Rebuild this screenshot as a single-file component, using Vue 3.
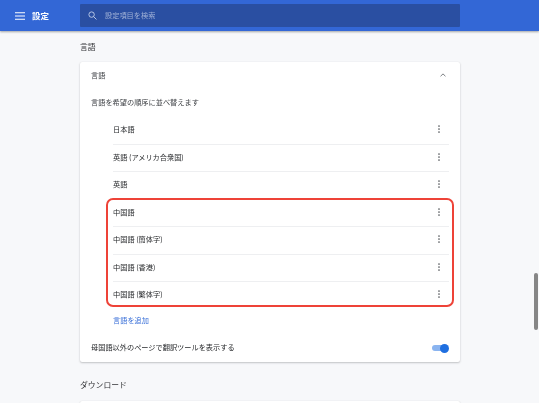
<script setup>
const languages = ['日本語', '英語 (アメリカ合衆国)', '英語', '中国語', '中国語 (簡体字)', '中国語 (香港)', '中国語 (繁体字)']
</script>

<template>
  <div class="page">
    <header class="topbar">
      <div class="brand">
        <svg class="menu" viewBox="0 0 10 8" width="10" height="8"><path d="M0 .75h10M0 4h10M0 7.25h10" stroke="#fff" stroke-width="1.1" /></svg>
        <span class="title">設定</span>
      </div>
      <div class="search">
        <svg viewBox="0 0 10 10" width="9" height="9"><circle cx="4" cy="4" r="3" fill="none" stroke="#c3d0ea" stroke-width="1" /><path d="M6.2 6.2 9.4 9.4" stroke="#c3d0ea" stroke-width="1" /></svg>
        <span class="placeholder">設定項目を検索</span>
      </div>
    </header>
    <main class="content">
      <h2 class="section-title">言語</h2>
      <section class="card">
        <div class="card-head">
          <span>言語</span>
          <svg viewBox="0 0 8 5" width="6" height="4"><path d="M.7 4.2 4 1l3.3 3.2" fill="none" stroke="#5f6368" stroke-width="1.1" /></svg>
        </div>
        <div class="hint">言語を希望の順序に並べ替えます</div>
        <ul class="list">
          <li v-for="lang in languages" :key="lang" class="lang-row">
            <span>{{ lang }}</span>
            <svg class="dots" viewBox="0 0 2 8" width="2" height="8"><circle cx="1" cy="1" r="0.85" /><circle cx="1" cy="4" r="0.85" /><circle cx="1" cy="7" r="0.85" /></svg>
          </li>
        </ul>
        <div class="highlight"></div>
        <a class="add">言語を追加</a>
        <div class="translate">
          <span class="translate-label">母国語以外のページで翻訳ツールを表示する</span>
          <span class="toggle"><i></i></span>
        </div>
      </section>
      <h2 class="section-title download">ダウンロード</h2>
      <section class="card stub"></section>
    </main>
    <div class="scrollbar"></div>
  </div>
</template>

<style scoped>
.page {
  position: relative;
  width: 539px;
  height: 403px;
  overflow: hidden;
  background: #f7f8fa;
  color: #26282b;
  font-family: "Noto Sans CJK JP", "Liberation Sans", sans-serif;
  font-size: 7.2px;
  filter: blur(0.3px);
}
.topbar {
  display: flex;
  align-items: center;
  height: 31px;
  box-sizing: border-box;
  padding-left: 15px;
  background: #3367d6;
  box-shadow: 0 1px 2px rgba(60, 64, 67, 0.45);
}
.brand {
  display: flex;
  align-items: center;
  gap: 7px;
  width: 65px;
}
.title {
  padding-bottom: 1px;
  color: #fff;
  font-size: 8.5px;
  font-weight: 700;
}
.search {
  display: flex;
  align-items: center;
  gap: 8px;
  width: 380px;
  height: 23px;
  box-sizing: border-box;
  padding-left: 8px;
  background: #2a4fa2;
  border-radius: 1px;
}
.placeholder {
  padding-bottom: 2px;
  color: #9fb0d6;
  font-size: 7.2px;
}
.content {
  width: 380px;
  margin-left: 80px;
}
.section-title {
  height: 31px;
  margin: 0;
  padding-top: 10px;
  box-sizing: border-box;
  font-size: 7.8px;
  font-weight: 400;
  line-height: 11px;
  color: #303134;
}
.card {
  position: relative;
  background: #fff;
  border-radius: 2px;
  box-shadow: 0 1px 2px rgba(60, 64, 67, 0.28), 0 0 1px rgba(60, 64, 67, 0.12);
}
.card-head {
  display: flex;
  align-items: center;
  justify-content: space-between;
  height: 27px;
  box-sizing: border-box;
  padding: 0 14px 2px 11px;
  color: #3c3f43;
}
.hint {
  display: flex;
  align-items: center;
  height: 27px;
  box-sizing: border-box;
  padding: 0 0 2px 11px;
  color: #3c3f43;
}
.list {
  margin: 0;
  padding: 0 11px 0 33px;
  list-style: none;
}
.lang-row {
  display: flex;
  align-items: center;
  justify-content: space-between;
  height: 27.5px;
  box-sizing: border-box;
  padding: 0 9px 2px 0;
  border-top: 1px solid #eeeff1;
}
.lang-row:first-child {
  border-top: 0;
}
.dots {
  fill: #55585c;
}
.highlight {
  position: absolute;
  left: 26px;
  top: 136px;
  width: 348px;
  height: 109px;
  box-sizing: border-box;
  border: 2px solid #ee4338;
  border-radius: 7px;
  pointer-events: none;
}
.add {
  display: block;
  height: 26px;
  padding-left: 33px;
  color: #3a70d8;
  line-height: 23px;
}
.translate {
  display: flex;
  align-items: center;
  justify-content: space-between;
  height: 27px;
  padding: 0 11px;
}
.translate-label {
  padding-bottom: 1.5px;
}
.toggle {
  position: relative;
  display: block;
  width: 15px;
  height: 6px;
  margin-right: 2px;
  border-radius: 3px;
  background: #8ab4f0;
}
.toggle i {
  position: absolute;
  right: -2px;
  top: -1.5px;
  width: 9px;
  height: 9px;
  border-radius: 50%;
  background: #1f6fe0;
}
.download {
  height: 39px;
  padding-top: 17px;
}
.stub {
  height: 40px;
}
.scrollbar {
  position: absolute;
  right: 1px;
  top: 273px;
  width: 4px;
  height: 57px;
  border-radius: 2px;
  background: #868686;
}
</style>
